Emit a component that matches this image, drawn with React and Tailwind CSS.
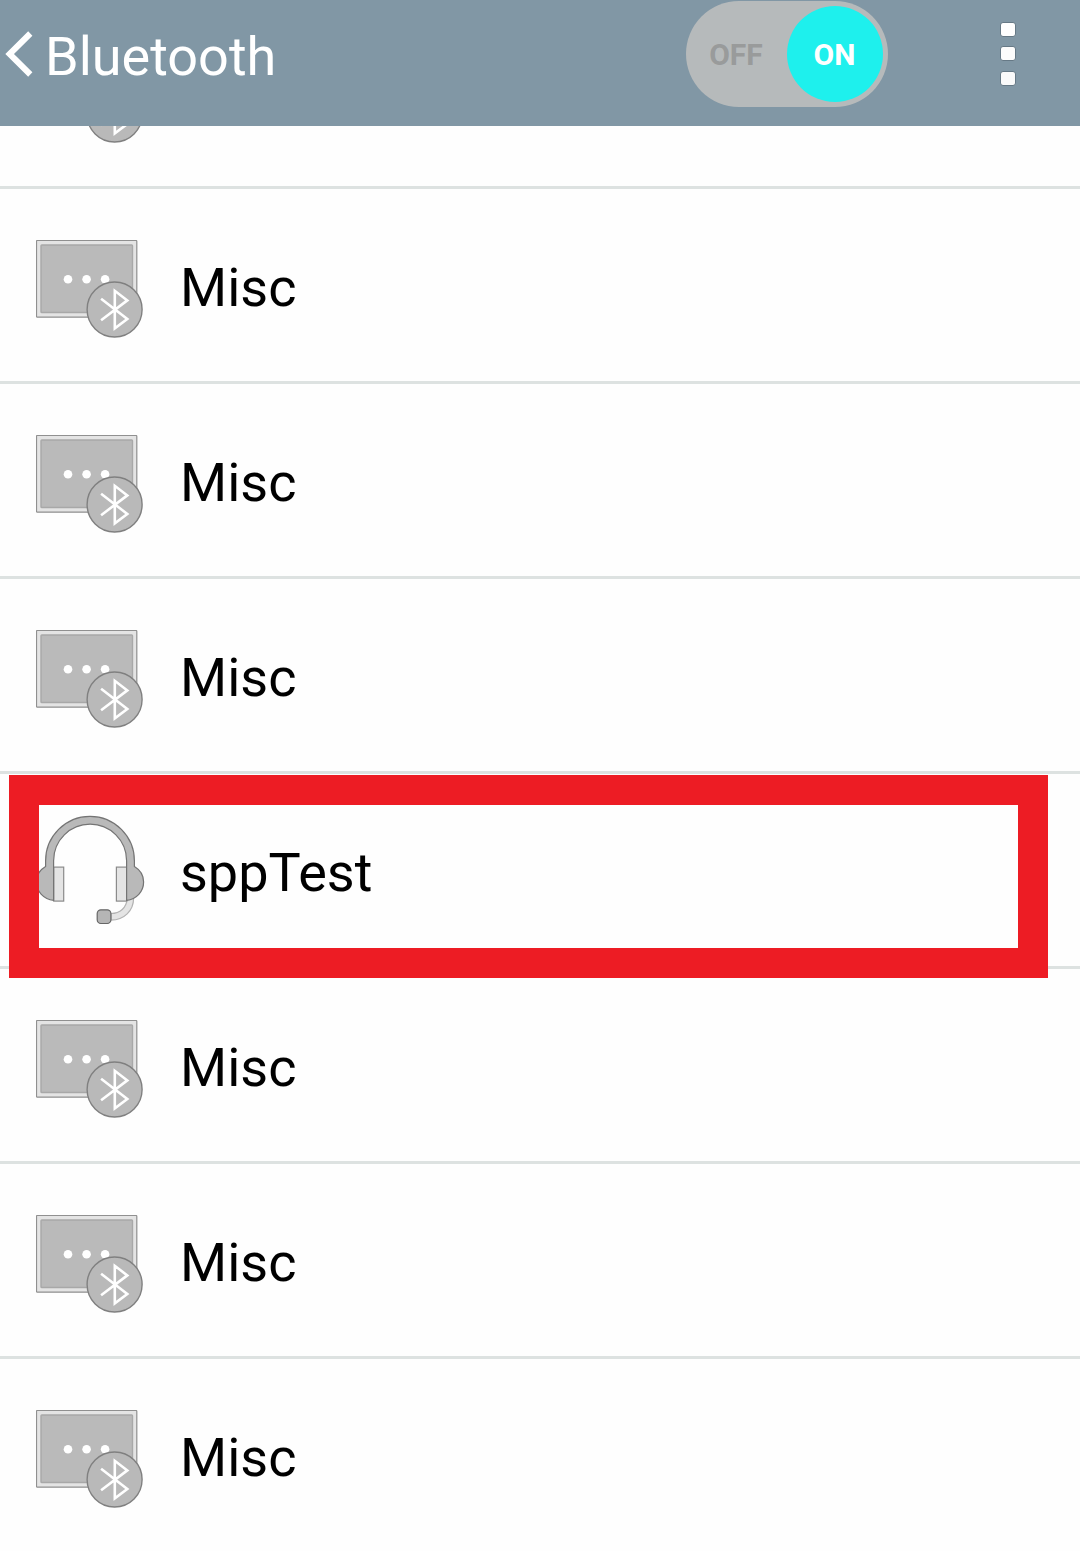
function MiscIcon() {
  return (
    <svg className="block h-[110px] w-[110px]" viewBox="0 0 110 110" fill="none">
      <rect x="0.5" y="0.5" width="100.3" height="76.7" rx="0.8" fill="#e4e4e4" stroke="#909090" strokeWidth="1.2" />
      <rect x="5" y="5" width="91.5" height="67.5" rx="0.8" fill="#bababa" stroke="#a8a8a8" strokeWidth="1.4" />
      <circle cx="32" cy="39.2" r="4.3" fill="#fff" />
      <circle cx="50.6" cy="39.2" r="4.3" fill="#fff" />
      <circle cx="69.1" cy="39.2" r="4.3" fill="#fff" />
      <circle cx="78.6" cy="69.5" r="27.5" fill="#b9b9b9" stroke="#808080" strokeWidth="1.4" />
      <path d="M65.1 58.7 L91.3 79 L78.8 88.4 V50.8 L91.3 60.4 L65.1 80.2" stroke="#fff" strokeWidth="2.6" />
    </svg>
  );
}

function HeadsetIcon() {
  return (
    <svg className="block h-[110px] w-[110px]" viewBox="0 0 110 110" stroke="#8b8b8b" strokeWidth="1.2">
      <path d="M97.6 83 C97.6 96 88 105 75 105.2 V98.5 C84 98.5 90.5 93 91.4 83 Z" fill="#e4e4e4" stroke="#b2b2b2" />
      <rect x="17.7" y="52.1" width="10" height="34" fill="#e4e4e4" />
      <rect x="80.4" y="52.1" width="10.2" height="34" fill="#e4e4e4" />
      <path
        d="M9.6 51.5 V45.7 A44.3 44.3 0 0 1 98.4 45.7 V51.5 C104.3 55 107.6 60.5 107.6 67 C107.6 76.5 100.5 84.3 90.6 85.3 V45.7 A36.5 36.5 0 0 0 17.6 45.7 V85.3 C7.7 84.3 0.4 76.5 0.4 67 C0.4 60.5 3.7 55 9.6 51.5 Z"
        fill="#b9b9b9"
        stroke="#747474"
      />
      <rect x="61.2" y="94.8" width="13.7" height="13.7" rx="3.7" fill="#b5b5b5" stroke="#666" />
    </svg>
  );
}

function DeviceRow({ name, headset }) {
  return (
    <li className="flex h-[195px] shrink-0 border-b-[3px] border-[#dde2e1] pl-9">
      <div className={headset ? 'pt-[41px]' : 'pt-[51px]'}>{headset ? <HeadsetIcon /> : <MiscIcon />}</div>
      <span className="ml-[34px] pt-[67px] text-[54px] leading-[63px] text-black">{name}</span>
    </li>
  );
}

function Header() {
  return (
    <header className="relative z-10 flex h-[126px] shrink-0 items-start bg-[#8197a5]">
      <svg className="mt-[30px] ml-[4px] h-[48px] w-[30px]" viewBox="0 0 30 48" fill="none">
        <path d="M26.3 3.5 L5.6 24 L26.3 44.5" stroke="#fff" strokeWidth="6" />
      </svg>
      <h1 className="mt-[25px] ml-[11px] w-[641px] text-[54px] leading-[63px] text-white">Bluetooth</h1>
      <div className="mt-px flex h-[106px] w-[202px] items-center rounded-full bg-[#b6babb] pr-[5px] text-[30px] font-bold">
        <span className="w-[100px] text-center text-[#999b9b]">OFF</span>
        <span className="ml-px flex h-24 w-24 items-center justify-center rounded-full bg-[#1ef0ed] pr-px text-white">ON</span>
      </div>
      <div className="mt-[22px] ml-[112px] flex flex-col gap-[9px]">
        <i className="h-[15px] w-4 rounded-[3px] border border-[#667986] bg-white" />
        <i className="h-[15px] w-4 rounded-[3px] border border-[#667986] bg-[#fcfcfc]" />
        <i className="mt-px h-[15px] w-4 rounded-[3px] border border-[#667986] bg-[#fafafa]" />
      </div>
    </header>
  );
}

const devices = ['Misc', 'Misc', 'Misc', 'sppTest', 'Misc', 'Misc', 'Misc'];

export default function App() {
  return (
    <main className="relative flex h-[1551px] w-[1080px] flex-col overflow-hidden bg-[#fefefe] font-['Roboto',sans-serif]">
      <Header />
      <ul className="flex h-[1425px] flex-col overflow-hidden">
        <li className="flex h-[63px] shrink-0 flex-col justify-end overflow-hidden border-b-[3px] border-[#dde2e1] pl-9">
          <div className="h-[141px] shrink-0">
            <MiscIcon />
          </div>
        </li>
        {devices.map((name, i) => (
          <DeviceRow key={i} name={name} headset={name === 'sppTest'} />
        ))}
      </ul>
      <div className="absolute top-[775px] left-[9px] h-[203px] w-[1039px] border-[30px] border-[#ed1c24]" />
    </main>
  );
}
